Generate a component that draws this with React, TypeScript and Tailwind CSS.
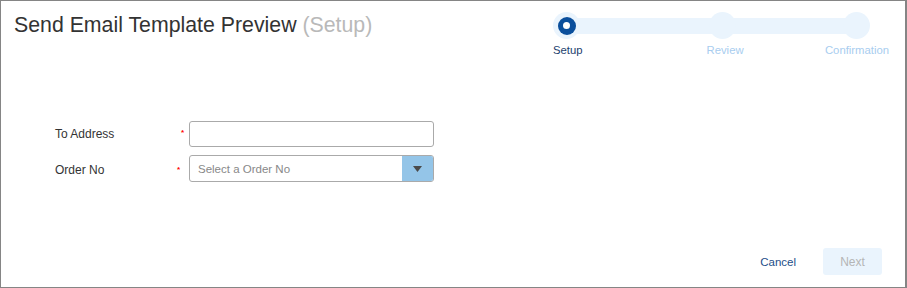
const Stepper = () => (
  <div className="w-[336px] mr-[16px] pt-[11px]">
    {/* track with step dots */}
    <div className="relative flex items-center h-[27px]">
      <div className="absolute left-[13px] w-[290px] top-[6px] h-[16px] bg-[#eaf4fd]" />
      <div className="relative h-[27px] w-[27px] rounded-full bg-[#eaf4fd] flex items-center justify-center">
        <div className="h-[18px] w-[18px] rounded-full bg-[#0b4f9c] flex items-center justify-center">
          <div className="h-[7px] w-[7px] rounded-full bg-white" />
        </div>
      </div>
      <div className="relative ml-[129px] h-[27px] w-[27px] rounded-full bg-[#eaf4fd]" />
      <div className="relative ml-[107px] h-[27px] w-[27px] rounded-full bg-[#eaf4fd]" />
    </div>
    <div className="flex text-[11.3px] leading-none mt-[6px]">
      <span className="text-[#1d3f6e]">Setup</span>
      <span className="text-[#a8cdef] ml-[124px]">Review</span>
      <span className="text-[#a8cdef] ml-auto">Confirmation</span>
    </div>
  </div>
);

export default function App() {
  return (
    <div className="w-[907px] h-[288px] bg-white border border-[#858585] border-r-2 flex flex-col font-['Liberation_Sans',Arial,sans-serif] text-[#333]">
      {/* Header */}
      <div className="flex justify-between items-start">
        <h1 className="pl-[13px] pt-[11px] text-[21.3px] leading-[27px] text-[#333]">
          Send Email Template Preview <span className="text-[#b9b9b9]">(Setup)</span>
        </h1>
        <Stepper />
      </div>

      {/* Form */}
      <div className="flex flex-col gap-[8px] pl-[54px] mt-[65px]">
        <div className="flex items-center">
          <label className="w-[126px] text-[12px]">To Address</label>
          <span className="w-[8px] text-[8px] font-bold text-[#f00] leading-none -mt-[2px]">*</span>
          <input className="w-[245px] h-[26px] border border-[#aaa] rounded-[3px] px-2 text-[12px] outline-none" />
        </div>
        <div className="flex items-center">
          <label className="w-[122px] text-[12px] pt-[2px]">Order No</label>
          <span className="w-[12px] text-[8px] font-bold text-[#f00] leading-none pt-[3px]">*</span>
          <div className="w-[245px] h-[27px] border border-[#aaa] rounded-[3px] flex overflow-hidden">
            <div className="flex-1 flex items-center px-2 pt-[2px] text-[11.5px] text-[#888]">Select a Order No</div>
            <div className="w-[31px] bg-[#94c5e8] flex items-center justify-center">
              <svg width="9" height="6" viewBox="0 0 9 6">
                <path d="M0 0h9L4.5 6z" fill="#4a4a4a" />
              </svg>
            </div>
          </div>
        </div>
      </div>

      {/* Footer */}
      <div className="mt-auto flex justify-end items-center gap-[27px] pr-[23px] pb-[12px]">
        <button type="button" className="text-[11.5px] text-[#1d4e89] pt-[2px]">Cancel</button>
        <button type="button" className="w-[59px] h-[27px] rounded-[3px] bg-[#eaf4fd] text-[12px] text-[#b5b5b5]">Next</button>
      </div>
    </div>
  );
}
